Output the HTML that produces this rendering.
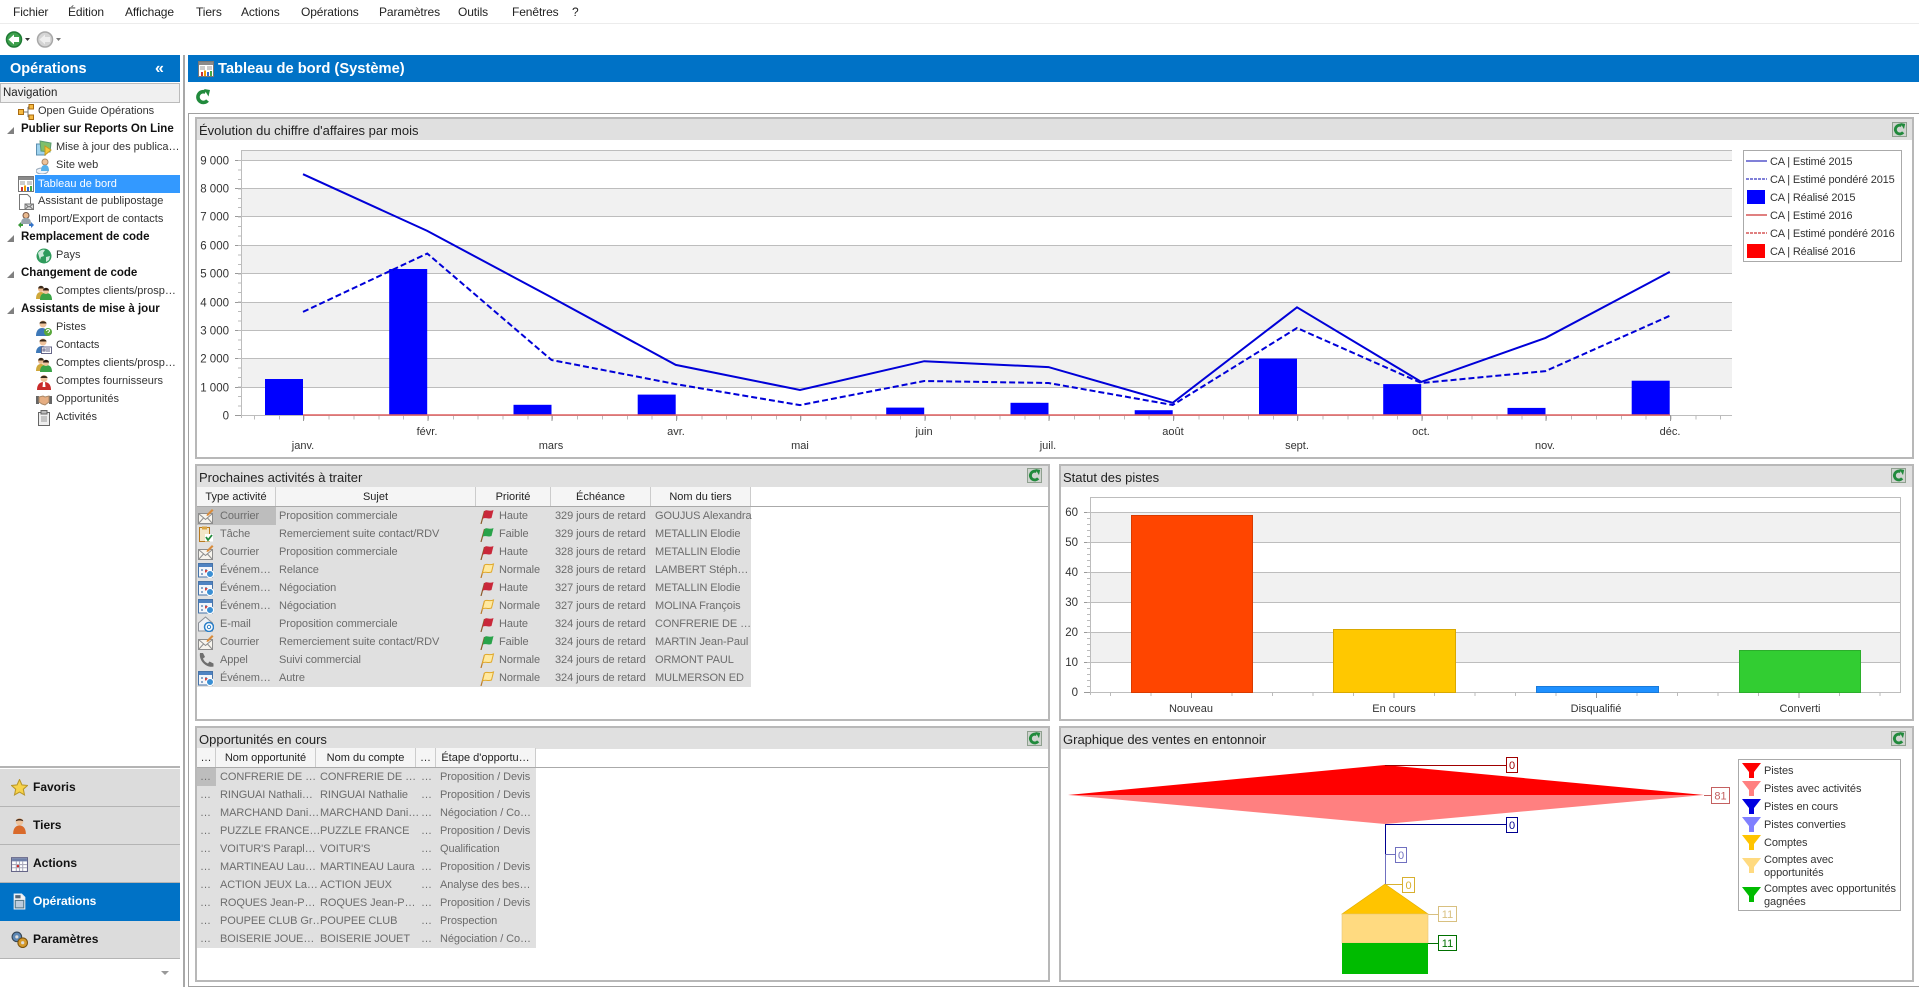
<!DOCTYPE html>
<html lang="fr"><head><meta charset="utf-8"><title>Tableau de bord</title>
<style>
html,body{margin:0;padding:0;background:#fff}
body{width:1919px;height:987px;overflow:hidden;position:relative;font:11px/18px "Liberation Sans",sans-serif;color:#222}
.a,.t,.p,.h,.r,.ic{position:absolute}
.t{white-space:nowrap}
.ic{width:16px;height:16px}
.m{top:3px;color:#222;font-size:12px;letter-spacing:-.1px}
.tree{font-size:11px;color:#333;line-height:19px}
.b{font-weight:bold;color:#111;font-size:11.500px;line-height:19px}
.p{border:2px solid #b8b8b8;background:#fff;box-sizing:border-box}
.h{left:0;right:0;top:0;height:21px;background:#e0e0e0;font-size:13px;line-height:24px;padding-left:2px;color:#222;white-space:nowrap}
.rb{position:absolute;width:15px;height:15px;background:#cfd4cf;border:1px solid #8fa08f;box-sizing:border-box}
.rb svg{display:block;width:13px;height:13px}
.gh{position:absolute;height:19px;background:#f5f5f5;border-right:1px solid #ccc;box-sizing:border-box;text-align:center;line-height:21px;color:#222;font-size:11px;white-space:nowrap;overflow:hidden}
.ln{position:absolute;height:1px;background:#aaa}
.g{position:absolute;background:#e0e0e0}
.r{height:18px;left:0;right:0;color:#6c6c6c;font-size:11px;letter-spacing:-.08px;line-height:19px;white-space:nowrap}
.r span{position:absolute;top:0}
.r svg{position:absolute;top:1px;width:16px;height:16px}
.n{position:absolute;left:0;width:180px;height:37px;background:#dcdcdc;font-weight:bold;font-size:12px;line-height:37px;color:#111;text-indent:33px;border-bottom:1px solid #b4b4b4;box-sizing:content-box}
.n svg{position:absolute;left:11px;top:10px;width:17px;height:17px}
svg text{font-family:"Liberation Sans",sans-serif}
</style></head><body>
<svg width="0" height="0" style="position:absolute"><defs>
<symbol id="ref" viewBox="0 0 16 16"><path d="M12.500 11.500a5.400 5.400 0 1 1-2-8.400" fill="none" stroke="#218a3c" stroke-width="3.600"/><path d="M9 0l6 1-1.500 6.500z" fill="#218a3c"/></symbol>
<symbol id="dash" viewBox="0 0 16 16"><rect x=".5" y=".5" width="15" height="15" fill="#fff" stroke="#777"/><rect x="1" y="1" width="14" height="3" fill="#8a8a8a"/><path d="M2 6h5M9 6h5M2 8h5M9 8h5" stroke="#999"/><rect x="3" y="11" width="2" height="4" fill="#c33"/><rect x="6" y="9.500" width="2" height="5.500" fill="#e90"/><rect x="9" y="11" width="2" height="4" fill="#36c"/><rect x="12" y="10" width="2" height="5" fill="#4a4"/></symbol>
<symbol id="guide" viewBox="0 0 16 16"><path d="M6 8h4M10 3v10M10 3h2M10 13h2" stroke="#777" fill="none"/><rect x=".5" y="5.500" width="5" height="5" fill="#f5b942" stroke="#a86a10"/><rect x="11" y=".5" width="4.500" height="4.500" fill="#f5b942" stroke="#a86a10"/><rect x="11" y="11" width="4.500" height="4.500" fill="#f5b942" stroke="#a86a10"/></symbol>
<symbol id="pub" viewBox="0 0 16 16"><rect x="0.500" y="4" width="9" height="11" fill="#9fd3ee" stroke="#5b8fb0"/><path d="M4 1l11 2-1 9-9-1z" fill="#7fbf6a" stroke="#5a9a70"/><path d="M9 6l6 4-6 5z" fill="#f7c83a" stroke="#c79a20"/></symbol>
<symbol id="web" viewBox="0 0 16 16"><ellipse cx="6" cy="13" rx="6" ry="3" fill="#eef4fa" stroke="#9ab"/><circle cx="9" cy="4" r="3" fill="#eec39a" stroke="#a86"/><path d="M5 13c0-5 2-6 4-6s4 1 4 6z" fill="#58b0e8"/></symbol>
<symbol id="mail" viewBox="0 0 16 16"><path d="M1.500 .5h8l3 3v12h-11z" fill="#fff" stroke="#777"/><rect x="7" y="10" width="8.500" height="5.500" fill="#ddd" stroke="#777"/><path d="M7 10l4 3 4-3M7 15.500l3-3M15 15.500l-3-3" stroke="#777" fill="none"/></symbol>
<symbol id="imp" viewBox="0 0 16 16"><circle cx="8" cy="3.500" r="3" fill="#e9b98e" stroke="#754"/><path d="M3 12c0-5 2-6 5-6s5 1 5 6z" fill="#99a4ad"/><path d="M0 13l3-3v2h2v2H3v2z" fill="#3a9a3a"/><path d="M16 13l-3-3v2h-2v2h2v2z" fill="#3575c9"/></symbol>
<symbol id="globe" viewBox="0 0 16 16"><circle cx="8" cy="8" r="7.500" fill="#2f9b5c"/><path d="M2 5c2-3 5-4 7-3l-2 3 1 3-3 1-1 3zM10 9l4-1-1 4-3 2z" fill="#cfeadb"/></symbol>
<symbol id="pers" viewBox="0 0 16 16"><path d="M2 16c0-6 3-8 6-8s6 2 6 8z" fill="#d96a2b"/><circle cx="8" cy="4.500" r="3.500" fill="#efc39c"/><path d="M4.500 4c0-3 7-3 7 0-2-1-5-1-7 0z" fill="#4a2d1a"/></symbol>
<symbol id="pG" viewBox="0 0 16 16"><circle cx="5" cy="5" r="3" fill="#e9b98e"/><path d="M2.200 4.500c0-3.500 5.600-3.500 5.600 0z" fill="#3a2a1a"/><path d="M0 15c0-5 2-7 5-7s4 2 4 7z" fill="#cfa83a"/><path d="M4 16c0-6 3-7 6-7s6 1 6 7z" fill="#3aa346"/><circle cx="10" cy="7" r="3" fill="#efc39c"/><path d="M7 6.500c0-3.500 6-3.500 6 0z" fill="#2a1a10"/></symbol>
<symbol id="pB" viewBox="0 0 16 16"><path d="M0 16c0-6 3-8 6-8s6 2 6 8z" fill="#3d78b8"/><circle cx="7" cy="4" r="3.500" fill="#efc39c"/><path d="M3.500 3.500c0-3 7-3 7 0z" fill="#3a2a1a"/><circle cx="12" cy="12" r="4" fill="#5aa83c"/><path d="M10.500 11c0-2 3-2 3 0 0 1-1.500 1-1.500 2" stroke="#fff" fill="none"/></symbol>
<symbol id="pC" viewBox="0 0 16 16"><path d="M0 15c0-5 3-7 6-7s6 2 6 7z" fill="#3d78b8"/><circle cx="7" cy="4" r="3.500" fill="#efc39c"/><path d="M3.500 3.500c0-3 7-3 7 0z" fill="#3a2a1a"/><rect x="5.500" y="9" width="10" height="6.500" fill="#fff" stroke="#668"/><path d="M7 11h2v2H7zM10 11h4M10 13h4" stroke="#668" fill="none"/></symbol>
<symbol id="pR" viewBox="0 0 16 16"><path d="M1 16c0-6 3-8 7-8s7 2 7 8z" fill="#c92a2a"/><circle cx="8" cy="4.500" r="3.500" fill="#efc39c"/><path d="M4.500 4c0-3 7-3 7 0z" fill="#3a2a1a"/><path d="M7 8h2l.5 5h-3z" fill="#fff"/></symbol>
<symbol id="hands" viewBox="0 0 16 16"><path d="M0 4h3v8H0zM13 4h3v8h-3z" fill="#666"/><path d="M3 5l4-1 2 1 4-1v6l-4 3-3-1-3-2z" fill="#e6ae82" stroke="#a86"/></symbol>
<symbol id="clip" viewBox="0 0 16 16"><rect x="2.500" y="2.500" width="11" height="13" fill="#eee" stroke="#666"/><rect x="5" y="0.500" width="6" height="3.500" fill="#bbb" stroke="#666"/><path d="M5 7h6M5 9h6M5 11h6" stroke="#999"/></symbol>
<symbol id="env" viewBox="0 0 16 16"><rect x=".5" y="5.500" width="14" height="10" fill="#f6f4ee" stroke="#8d8d8d"/><path d="M.5 5.500l7 6 7-6M.5 15.500l5.500-6M14.500 15.500L9 9.500" fill="none" stroke="#8d8d8d"/><path d="M9 6l5-5 1.500 1.500-5 5-2 .5z" fill="#d98b3a"/></symbol>
<symbol id="task" viewBox="0 0 16 16"><rect x="1.500" y="1.500" width="10" height="14" fill="#f2e6c8" stroke="#b7791f"/><rect x="4" y=".5" width="5" height="3" fill="#d9a441"/><rect x="7" y="8" width="8" height="7.500" fill="#fff"/><path d="M8 11l2 3 4-5" fill="none" stroke="#1f8a3c" stroke-width="1.800"/></symbol>
<symbol id="evt" viewBox="0 0 16 16"><rect x=".5" y="1.500" width="14" height="13.500" fill="#f4f6fa" stroke="#4673a8"/><rect x="1" y="2" width="13" height="3" fill="#4f83c2"/><path d="M3 7h2v2H3zM7 7h2v2H7zM3 11h2v2H3z" fill="#8aa6c8"/><rect x="7" y="8" width="2.500" height="2.500" fill="#c44"/><circle cx="12" cy="12" r="3.500" fill="#3a8fd4" stroke="#fff"/></symbol>
<symbol id="em" viewBox="0 0 16 16"><path d="M.5 7l7-6 7 6v8H.5z" fill="#eef1f5" stroke="#8a8f96"/><circle cx="11" cy="11" r="4.500" fill="#fff" stroke="#2a7fc9" stroke-width="1.500"/><circle cx="11" cy="11" r="1.700" fill="none" stroke="#2a7fc9"/></symbol>
<symbol id="tel" viewBox="0 0 16 16"><path d="M2 1l3 0 2 4-2 1.500c1 2.500 2.500 4 5 5l1.500-2 4 2v3c-7 2-15-6-13.500-13.500z" fill="#6f6f6f"/></symbol>
<symbol id="fR" viewBox="0 0 16 16"><path d="M2 16L5.500 3" stroke="#8a5a2a" stroke-width="1.200"/><path d="M5.500 3c3-2 4 1 9-1l-2 8c-4 1.500-6-1-9 1z" fill="#c9283a"/></symbol>
<symbol id="fG" viewBox="0 0 16 16"><path d="M2 16L5.500 3" stroke="#8a5a2a" stroke-width="1.200"/><path d="M5.500 3c3-2 4 1 9-1l-2 8c-4 1.500-6-1-9 1z" fill="#2aa34a"/></symbol>
<symbol id="fY" viewBox="0 0 16 16"><path d="M2 16L5.500 3" stroke="#b87a2a" stroke-width="1.200"/><path d="M5.500 3c3-2 4 1 9-1l-2 8c-4 1.500-6-1-9 1z" fill="#ffe9a0" stroke="#e0a82a"/></symbol>
<symbol id="star" viewBox="0 0 16 16"><path d="M8 .5l2.300 5 5.200.6-3.900 3.500 1.100 5.400L8 12.300l-4.700 2.700 1.100-5.400L.5 6.100l5.200-.6z" fill="#f7d34a" stroke="#b8962a"/></symbol>
<symbol id="cal" viewBox="0 0 16 16"><rect x=".5" y="2.500" width="15" height="13" fill="#fff" stroke="#668"/><rect x="1" y="3" width="14" height="3" fill="#6f7fa8"/><path d="M1 9h14M1 12h14M5 6v9M8 6v9M11 6v9" stroke="#aab"/><rect x="5.500" y="9.500" width="2" height="2" fill="#c22"/></symbol>
<symbol id="opw" viewBox="0 0 16 16"><path d="M3 1h7l3 3v11H3z" fill="#f2f2f2" stroke="#e8eef5"/><rect x="4" y="7" width="8" height="7" fill="#bcd" stroke="#578"/><rect x="4" y="2" width="5" height="3" fill="#567"/></symbol>
<symbol id="gear" viewBox="0 0 16 16"><circle cx="5.500" cy="5.500" r="4.500" fill="#5d87b4" stroke="#345"/><circle cx="5.500" cy="5.500" r="1.500" fill="#dcdcdc"/><circle cx="11" cy="11" r="4.500" fill="#d59a2b" stroke="#7a5310"/><circle cx="11" cy="11" r="1.500" fill="#dcdcdc"/></symbol>
</defs></svg>

<!-- menu -->
<div class="a" style="left:0;top:23px;width:1919px;height:1px;background:#ececec"></div>
<span class="t m" style="left:13px">Fichier</span>
<span class="t m" style="left:68px">Édition</span>
<span class="t m" style="left:125px">Affichage</span>
<span class="t m" style="left:196px">Tiers</span>
<span class="t m" style="left:241px">Actions</span>
<span class="t m" style="left:301px">Opérations</span>
<span class="t m" style="left:379px">Paramètres</span>
<span class="t m" style="left:458px">Outils</span>
<span class="t m" style="left:512px">Fenêtres</span>
<span class="t m" style="left:572px">?</span>
<!-- nav buttons -->
<svg class="a" style="left:5px;top:30px" width="58" height="19" viewBox="0 0 58 19"><circle cx="9" cy="9.500" r="7.500" fill="#3da04c" stroke="#1f7a34" stroke-width="1.500"/><path d="M3.500 9.500l5.500-5V7h5v5H9v2.500z" fill="#fff"/><path d="M20 8h5l-2.500 3z" fill="#333"/><circle cx="40" cy="9.500" r="7.500" fill="#d4d4d4" stroke="#a8a8a8" stroke-width="1.500"/><path d="M34.500 9.500l5.500-5V7h5v5h-5v2.500z" fill="#eee"/><path d="M51 8h5l-2.500 3z" fill="#777"/></svg>

<!-- sidebar -->
<div class="a" style="left:0;top:55px;width:180px;height:27px;background:#0072c6;color:#fff;font:bold 14.500px/28px 'Liberation Sans',sans-serif;text-indent:10px">Opérations<span class="t" style="left:155px;top:0;font-size:16px;text-indent:0">«</span></div>
<div class="a" style="left:0;top:83px;width:180px;height:20px;background:#f0f0f0;border:1px solid #bbb;box-sizing:border-box;line-height:19px;font-size:11.500px;padding-left:2px">Navigation</div>
<svg class="a" style="left:0;top:100px" width="20" height="230" viewBox="0 0 20 230"><g fill="#808080"><path d="M7 34l7-7v7zM7 142l7-7v7zM7 178l7-7v7zM7 214l7-7v7z"/></g></svg>

<svg class="ic" style="left:18px;top:104px"><use href="#guide"/></svg><span class="t tree" style="left:38px;top:102px">Open Guide Opérations</span>
<span class="t b" style="left:21px;top:120px">Publier sur Reports On Line</span>
<svg class="ic" style="left:36px;top:140px"><use href="#pub"/></svg><span class="t tree" style="left:56px;top:138px">Mise à jour des publica…</span>
<svg class="ic" style="left:36px;top:158px"><use href="#web"/></svg><span class="t tree" style="left:56px;top:156px">Site web</span>
<svg class="ic" style="left:18px;top:176px"><use href="#dash"/></svg><div class="a" style="left:35px;top:175px;width:145px;height:18px;background:#3399ff;color:#fff;line-height:19px;text-indent:3px">Tableau de bord</div>
<svg class="ic" style="left:18px;top:194px"><use href="#mail"/></svg><span class="t tree" style="left:38px;top:192px">Assistant de publipostage</span>
<svg class="ic" style="left:18px;top:212px"><use href="#imp"/></svg><span class="t tree" style="left:38px;top:210px">Import/Export de contacts</span>
<span class="t b" style="left:21px;top:228px">Remplacement de code</span>
<svg class="ic" style="left:36px;top:248px"><use href="#globe"/></svg><span class="t tree" style="left:56px;top:246px">Pays</span>
<span class="t b" style="left:21px;top:264px">Changement de code</span>
<svg class="ic" style="left:36px;top:284px"><use href="#pG"/></svg><span class="t tree" style="left:56px;top:282px">Comptes clients/prosp…</span>
<span class="t b" style="left:21px;top:300px">Assistants de mise à jour</span>
<svg class="ic" style="left:36px;top:320px"><use href="#pB"/></svg><span class="t tree" style="left:56px;top:318px">Pistes</span>
<svg class="ic" style="left:36px;top:338px"><use href="#pC"/></svg><span class="t tree" style="left:56px;top:336px">Contacts</span>
<svg class="ic" style="left:36px;top:356px"><use href="#pG"/></svg><span class="t tree" style="left:56px;top:354px">Comptes clients/prosp…</span>
<svg class="ic" style="left:36px;top:374px"><use href="#pR"/></svg><span class="t tree" style="left:56px;top:372px">Comptes fournisseurs</span>
<svg class="ic" style="left:36px;top:392px"><use href="#hands"/></svg><span class="t tree" style="left:56px;top:390px">Opportunités</span>
<svg class="ic" style="left:36px;top:410px"><use href="#clip"/></svg><span class="t tree" style="left:56px;top:408px">Activités</span>

<!-- bottom nav -->
<div class="a" style="left:0;top:766px;width:180px;height:2px;background:#b4b4b4"></div>
<div class="n" style="top:769px"><svg><use href="#star"/></svg>Favoris</div>
<div class="n" style="top:807px"><svg><use href="#pers"/></svg>Tiers</div>
<div class="n" style="top:845px"><svg><use href="#cal"/></svg>Actions</div>
<div class="n" style="top:883px;background:#0072c6;color:#fff;height:38px;border:0"><svg><use href="#opw"/></svg>Opérations</div>
<div class="n" style="top:921px"><svg><use href="#gear"/></svg>Paramètres</div>
<svg class="a" style="left:161px;top:971px" width="8" height="5"><path d="M0 0h8l-4 4z" fill="#999"/></svg>
<div class="a" style="left:183px;top:55px;width:2px;height:932px;background:#a8a8a8"></div>

<!-- main header -->
<div class="a" style="left:188px;top:55px;width:1731px;height:27px;background:#0072c6;color:#fff;font:bold 14.700px/28px 'Liberation Sans',sans-serif;text-indent:30px">Tableau de bord (Système)</div>
<svg class="ic" style="left:198px;top:61px"><use href="#dash"/></svg>
<svg class="ic" style="left:195px;top:89px"><use href="#ref"/></svg>
<div class="a" style="left:188px;top:113px;width:1731px;height:874px;border:1px solid #a0a0a0;box-sizing:border-box;border-right:0"></div>

<!-- panel 1 -->
<div class="p" style="left:195px;top:117px;width:1719px;height:342px"><div class="h">Évolution du chiffre d'affaires par mois</div></div>
<div class="rb" style="left:1892px;top:122px"><svg><use href="#ref"/></svg></div>
<svg class="a" style="left:197px;top:140px" width="1715" height="317" viewBox="197 140 1715 317">
<rect x="241" y="150" width="1491" height="10.500" fill="#f1f1f1"/>
<g fill="#f1f1f1"><rect x="241" y="188.500" width="1491" height="28"/><rect x="241" y="245" width="1491" height="28.500"/><rect x="241" y="302" width="1491" height="28.500"/><rect x="241" y="358.500" width="1491" height="28.500"/></g>
<g stroke="#bdbdbd" shape-rendering="crispEdges"><path d="M241 150.500H1732M241 160.500H1732M241 188.500H1732M241 216.500H1732M241 245.500H1732M241 273.500H1732M241 302.500H1732M241 330.500H1732M241 358.500H1732M241 387.500H1732M241 415.500H1732M241.500 150V418"/></g>
<g stroke="#999" fill="none" shape-rendering="crispEdges"><path d="M235 160.500h6M235 188.500h6M235 216.500h6M235 245.500h6M235 273.500h6M235 302.500h6M235 330.500h6M235 358.500h6M235 387.500h6M235 415.500h6"/>
<line x1="239.500" x2="239.500" y1="160" y2="415" stroke-width="3" stroke-dasharray="1 8.440" stroke="#bbb"/>
<line x1="241" x2="1732" y1="417.500" y2="417.500" stroke-width="4" stroke-dasharray="1 23.850" stroke="#bbb" stroke-dashoffset="-13"/>
<line x1="303" x2="1732" y1="418" y2="418" stroke-width="6" stroke-dasharray="1 123.250" stroke="#999"/></g>
<g fill="#0000ff"><rect x="265" y="379" width="38" height="36"/><rect x="389.200" y="269" width="38" height="146"/><rect x="513.500" y="404.800" width="38" height="10.200"/><rect x="637.700" y="394.600" width="38" height="20.400"/><rect x="762" y="414.500" width="38" height="1"/><rect x="886.200" y="407.600" width="38" height="7.400"/><rect x="1010.500" y="402.800" width="38" height="12.200"/><rect x="1134.700" y="410.200" width="38" height="4.800"/><rect x="1259" y="358.600" width="38" height="56.400"/><rect x="1383.200" y="384.100" width="38" height="30.900"/><rect x="1507.500" y="407.900" width="38" height="7.100"/><rect x="1631.700" y="380.700" width="38" height="34.300"/></g>
<path d="M303 415H1670" stroke="#e06060" stroke-width="1.500"/>
<polyline fill="none" stroke="#0000d8" stroke-width="2" points="303,174.200 427.250,230.900 551.500,297.400 675.750,364.900 800,390 924.250,361.200 1048.500,367.100 1172.750,402.800 1297,307.300 1421.250,381.900 1545.500,337.900 1669.750,271.900"/>
<polyline fill="none" stroke="#0000d8" stroke-width="2" stroke-dasharray="6 3" points="303,311.900 427.250,253.500 551.500,360 675.750,384.100 800,405.100 924.250,381 1048.500,383 1172.750,405 1297,328 1421.250,383 1545.500,371.100 1669.750,315.800"/>
<g font-size="11.500" fill="#333" text-anchor="end"><text x="229" y="164.500">9 000</text><text x="229" y="192.500">8 000</text><text x="229" y="220.500">7 000</text><text x="229" y="249.500">6 000</text><text x="229" y="277.500">5 000</text><text x="229" y="306.500">4 000</text><text x="229" y="334.500">3 000</text><text x="229" y="362.500">2 000</text><text x="229" y="391.500">1 000</text><text x="229" y="419.500">0</text></g>
<g font-size="11" fill="#333" text-anchor="middle"><text x="303" y="449">janv.</text><text x="427" y="435">févr.</text><text x="551" y="449">mars</text><text x="676" y="435">avr.</text><text x="800" y="449">mai</text><text x="924" y="435">juin</text><text x="1048" y="449">juil.</text><text x="1173" y="435">août</text><text x="1297" y="449">sept.</text><text x="1421" y="435">oct.</text><text x="1545" y="449">nov.</text><text x="1670" y="435">déc.</text></g>
<rect x="1743.500" y="150.500" width="158" height="111" fill="#fff" stroke="#aaa"/>
<g font-size="11" fill="#333" letter-spacing="-.15"><text x="1770" y="165">CA | Estimé 2015</text><text x="1770" y="183">CA | Estimé pondéré 2015</text><text x="1770" y="201">CA | Réalisé 2015</text><text x="1770" y="219">CA | Estimé 2016</text><text x="1770" y="237">CA | Estimé pondéré 2016</text><text x="1770" y="255">CA | Réalisé 2016</text></g>
<path d="M1746 161h21" stroke="#0000b0"/><path d="M1746 179h21" stroke="#0000b0" stroke-dasharray="3 1"/><rect x="1747" y="190" width="18" height="14" fill="#0000ff"/>
<path d="M1746 215h21" stroke="#c00000"/><path d="M1746 233h21" stroke="#c00000" stroke-dasharray="3 1"/><rect x="1747" y="244" width="18" height="14" fill="#ff0000"/>
</svg>

<!-- panel 2 left: activities -->
<div class="p" style="left:195px;top:464px;width:855px;height:257px"><div class="h">Prochaines activités à traiter</div></div>
<div class="rb" style="left:1027px;top:468px"><svg><use href="#ref"/></svg></div>
<div class="ln" style="left:197px;top:506px;width:851px"></div>
<div class="gh" style="left:197px;top:487px;width:79px">Type activité</div>
<div class="gh" style="left:276px;top:487px;width:200px">Sujet</div>
<div class="gh" style="left:476px;top:487px;width:75px">Priorité</div>
<div class="gh" style="left:551px;top:487px;width:100px">Échéance</div>
<div class="gh" style="left:651px;top:487px;width:100px">Nom du tiers</div>
<div class="g" style="left:197px;top:507px;width:554px;height:180px">
<div class="a" style="left:0;top:0;width:79px;height:18px;background:#bdbdbd"></div>
<div class="r" style="top:0"><svg style="left:1px"><use href="#env"/></svg><span style="left:23px">Courrier</span><span style="left:82px">Proposition commerciale</span><svg style="left:282px"><use href="#fR"/></svg><span style="left:302px">Haute</span><span style="left:358px">329 jours de retard</span><span style="left:458px">GOUJUS Alexandra</span></div>
<div class="r" style="top:18px"><svg style="left:1px"><use href="#task"/></svg><span style="left:23px">Tâche</span><span style="left:82px">Remerciement suite contact/RDV</span><svg style="left:282px"><use href="#fG"/></svg><span style="left:302px">Faible</span><span style="left:358px">329 jours de retard</span><span style="left:458px">METALLIN Elodie</span></div>
<div class="r" style="top:36px"><svg style="left:1px"><use href="#env"/></svg><span style="left:23px">Courrier</span><span style="left:82px">Proposition commerciale</span><svg style="left:282px"><use href="#fR"/></svg><span style="left:302px">Haute</span><span style="left:358px">328 jours de retard</span><span style="left:458px">METALLIN Elodie</span></div>
<div class="r" style="top:54px"><svg style="left:1px"><use href="#evt"/></svg><span style="left:23px">Événem…</span><span style="left:82px">Relance</span><svg style="left:282px"><use href="#fY"/></svg><span style="left:302px">Normale</span><span style="left:358px">328 jours de retard</span><span style="left:458px">LAMBERT Stéph…</span></div>
<div class="r" style="top:72px"><svg style="left:1px"><use href="#evt"/></svg><span style="left:23px">Événem…</span><span style="left:82px">Négociation</span><svg style="left:282px"><use href="#fR"/></svg><span style="left:302px">Haute</span><span style="left:358px">327 jours de retard</span><span style="left:458px">METALLIN Elodie</span></div>
<div class="r" style="top:90px"><svg style="left:1px"><use href="#evt"/></svg><span style="left:23px">Événem…</span><span style="left:82px">Négociation</span><svg style="left:282px"><use href="#fY"/></svg><span style="left:302px">Normale</span><span style="left:358px">327 jours de retard</span><span style="left:458px">MOLINA François</span></div>
<div class="r" style="top:108px"><svg style="left:1px"><use href="#em"/></svg><span style="left:23px">E-mail</span><span style="left:82px">Proposition commerciale</span><svg style="left:282px"><use href="#fR"/></svg><span style="left:302px">Haute</span><span style="left:358px">324 jours de retard</span><span style="left:458px">CONFRERIE DE …</span></div>
<div class="r" style="top:126px"><svg style="left:1px"><use href="#env"/></svg><span style="left:23px">Courrier</span><span style="left:82px">Remerciement suite contact/RDV</span><svg style="left:282px"><use href="#fG"/></svg><span style="left:302px">Faible</span><span style="left:358px">324 jours de retard</span><span style="left:458px">MARTIN Jean-Paul</span></div>
<div class="r" style="top:144px"><svg style="left:1px"><use href="#tel"/></svg><span style="left:23px">Appel</span><span style="left:82px">Suivi commercial</span><svg style="left:282px"><use href="#fY"/></svg><span style="left:302px">Normale</span><span style="left:358px">324 jours de retard</span><span style="left:458px">ORMONT PAUL</span></div>
<div class="r" style="top:162px"><svg style="left:1px"><use href="#evt"/></svg><span style="left:23px">Événem…</span><span style="left:82px">Autre</span><svg style="left:282px"><use href="#fY"/></svg><span style="left:302px">Normale</span><span style="left:358px">324 jours de retard</span><span style="left:458px">MULMERSON ED</span></div>
</div>

<!-- panel 3 left: opportunities -->
<div class="p" style="left:195px;top:726px;width:855px;height:256px"><div class="h">Opportunités en cours</div></div>
<div class="rb" style="left:1027px;top:731px"><svg><use href="#ref"/></svg></div>
<div class="ln" style="left:197px;top:767px;width:851px"></div>
<div class="gh" style="left:197px;top:748px;width:19px">…</div>
<div class="gh" style="left:216px;top:748px;width:100px">Nom opportunité</div>
<div class="gh" style="left:316px;top:748px;width:100px">Nom du compte</div>
<div class="gh" style="left:416px;top:748px;width:20px">…</div>
<div class="gh" style="left:436px;top:748px;width:100px">Étape d'opportu…</div>
<div class="g" style="left:197px;top:768px;width:339px;height:180px">
<div class="a" style="left:0;top:0;width:19px;height:18px;background:#bdbdbd"></div>
<div class="r" style="top:0"><span style="left:3px">…</span><span style="left:23px">CONFRERIE DE …</span><span style="left:123px">CONFRERIE DE …</span><span style="left:224px">…</span><span style="left:243px">Proposition / Devis</span></div>
<div class="r" style="top:18px"><span style="left:3px">…</span><span style="left:23px">RINGUAI Nathali…</span><span style="left:123px">RINGUAI Nathalie</span><span style="left:224px">…</span><span style="left:243px">Proposition / Devis</span></div>
<div class="r" style="top:36px"><span style="left:3px">…</span><span style="left:23px">MARCHAND Dani…</span><span style="left:123px">MARCHAND Dani…</span><span style="left:224px">…</span><span style="left:243px">Négociation / Co…</span></div>
<div class="r" style="top:54px"><span style="left:3px">…</span><span style="left:23px">PUZZLE FRANCE…</span><span style="left:123px">PUZZLE FRANCE</span><span style="left:224px">…</span><span style="left:243px">Proposition / Devis</span></div>
<div class="r" style="top:72px"><span style="left:3px">…</span><span style="left:23px">VOITUR'S Parapl…</span><span style="left:123px">VOITUR'S</span><span style="left:224px">…</span><span style="left:243px">Qualification</span></div>
<div class="r" style="top:90px"><span style="left:3px">…</span><span style="left:23px">MARTINEAU Lau…</span><span style="left:123px">MARTINEAU Laura</span><span style="left:224px">…</span><span style="left:243px">Proposition / Devis</span></div>
<div class="r" style="top:108px"><span style="left:3px">…</span><span style="left:23px">ACTION JEUX La…</span><span style="left:123px">ACTION JEUX</span><span style="left:224px">…</span><span style="left:243px">Analyse des bes…</span></div>
<div class="r" style="top:126px"><span style="left:3px">…</span><span style="left:23px">ROQUES Jean-P…</span><span style="left:123px">ROQUES Jean-P…</span><span style="left:224px">…</span><span style="left:243px">Proposition / Devis</span></div>
<div class="r" style="top:144px"><span style="left:3px">…</span><span style="left:23px">POUPEE CLUB Gr…</span><span style="left:123px">POUPEE CLUB</span><span style="left:224px">…</span><span style="left:243px">Prospection</span></div>
<div class="r" style="top:162px"><span style="left:3px">…</span><span style="left:23px">BOISERIE JOUE…</span><span style="left:123px">BOISERIE JOUET</span><span style="left:224px">…</span><span style="left:243px">Négociation / Co…</span></div>
</div>

<!-- panel right top -->
<div class="p" style="left:1059px;top:464px;width:855px;height:257px"><div class="h">Statut des pistes</div></div>
<div class="rb" style="left:1891px;top:468px"><svg><use href="#ref"/></svg></div>
<svg class="a" style="left:1061px;top:487px" width="851" height="232" viewBox="1061 487 851 232">
<g fill="#f1f1f1"><rect x="1090" y="512" width="811" height="30"/><rect x="1090" y="572" width="811" height="30"/><rect x="1090" y="632" width="811" height="30"/></g>
<g stroke="#bdbdbd" shape-rendering="crispEdges"><path d="M1090 497.500H1901M1090 512.500H1901M1090 542.500H1901M1090 572.500H1901M1090 602.500H1901M1090 632.500H1901M1090 662.500H1901M1090 692.500H1901M1090.500 497V695M1900.500 497V692"/></g>
<g stroke="#999" fill="none" shape-rendering="crispEdges"><path d="M1084 512.500h6M1084 542.500h6M1084 572.500h6M1084 602.500h6M1084 632.500h6M1084 662.500h6M1084 692.500h6"/>
<line x1="1088.500" x2="1088.500" y1="512" y2="692" stroke-width="3" stroke-dasharray="1 5" stroke="#bbb"/>
<line x1="1110" x2="1901" y1="694" y2="694" stroke-width="4" stroke-dasharray="1 39.500" stroke="#bbb"/>
<line x1="1191" x2="1901" y1="695" y2="695" stroke-width="6" stroke-dasharray="1 201.500" stroke="#999"/></g>
<rect x="1131.500" y="515.500" width="121" height="177" fill="#ff4500" stroke="#d93b00"/>
<rect x="1333.500" y="629.500" width="122" height="63" fill="#ffc800" stroke="#d9a800"/>
<rect x="1536.500" y="686.500" width="122" height="6" fill="#1e90ff" stroke="#1a7ad9"/>
<rect x="1739.500" y="650.500" width="121" height="42" fill="#32cd32" stroke="#2bae2b"/>
<g font-size="11.500" fill="#333" text-anchor="end"><text x="1078" y="516">60</text><text x="1078" y="546">50</text><text x="1078" y="576">40</text><text x="1078" y="606">30</text><text x="1078" y="636">20</text><text x="1078" y="666">10</text><text x="1078" y="696">0</text></g>
<g font-size="11" fill="#333" text-anchor="middle"><text x="1191" y="712">Nouveau</text><text x="1394" y="712">En cours</text><text x="1596" y="712">Disqualifié</text><text x="1800" y="712">Converti</text></g>
</svg>

<!-- panel right bottom: funnel -->
<div class="p" style="left:1059px;top:726px;width:855px;height:256px"><div class="h">Graphique des ventes en entonnoir</div></div>
<div class="rb" style="left:1891px;top:731px"><svg><use href="#ref"/></svg></div>
<svg class="a" style="left:1061px;top:748px" width="851" height="232" viewBox="1061 748 851 232">
<polygon points="1068,795 1385,765 1704,795" fill="#ff0000"/>
<polygon points="1068,795 1704,795 1385,824" fill="#ff8080"/>
<polygon points="1385,884 1428,914 1342,914" fill="#ffc400" stroke="#e0ae00" stroke-width=".6"/>
<rect x="1342" y="914" width="86" height="29" fill="#ffda80" stroke="#e8c878" stroke-width=".6"/>
<rect x="1342" y="943" width="86" height="31" fill="#00bb00"/>
<g fill="none" shape-rendering="crispEdges">
<path d="M1385 765.500H1506" stroke="#a00000"/>
<path d="M1704 795.500h7" stroke="#c46060"/>
<path d="M1385.500 824.500H1506M1385.500 824V854" stroke="#000090"/>
<path d="M1385.500 854V884M1385.500 854.500H1395" stroke="#7070c0"/>
<path d="M1385 884.500h17" stroke="#d8b030"/>
<path d="M1428 914.500h10" stroke="#d8c080"/>
<path d="M1428 943.500h10" stroke="#007000"/>
<g fill="#fff"><rect x="1506.500" y="757.500" width="11" height="15" stroke="#a00000"/><rect x="1711.500" y="787.500" width="18" height="16" stroke="#c46060"/><rect x="1506.500" y="817.500" width="11" height="15" stroke="#000090"/><rect x="1395.500" y="847.500" width="11" height="15" stroke="#7070c0"/><rect x="1402.500" y="877.500" width="12" height="15" stroke="#d8b030"/><rect x="1438.500" y="906.500" width="18" height="15" stroke="#d8c080"/><rect x="1438.500" y="935.500" width="18" height="15" stroke="#007000"/></g></g>
<g font-size="11" text-anchor="middle"><text x="1512" y="769" fill="#a00000">0</text><text x="1720.500" y="799.500" fill="#c46060">81</text><text x="1512" y="829" fill="#000090">0</text><text x="1401" y="859" fill="#7070c0">0</text><text x="1408.500" y="889" fill="#d8b030">0</text><text x="1447.500" y="918" fill="#d8c080">11</text><text x="1447.500" y="947" fill="#007000">11</text></g>
<rect x="1738.500" y="759.500" width="162" height="151" fill="#fff" stroke="#aaa"/>
<polygon points="1742,763 1761,763 1754,772 1754,778 1749,778 1749,772" fill="#ff0000"/>
<polygon points="1742,781 1761,781 1754,790 1754,796 1749,796 1749,790" fill="#ff8080"/>
<polygon points="1742,799 1761,799 1754,808 1754,814 1749,814 1749,808" fill="#0000e0"/>
<polygon points="1742,817 1761,817 1754,826 1754,832 1749,832 1749,826" fill="#8080ff"/>
<polygon points="1742,835 1761,835 1754,844 1754,850 1749,850 1749,844" fill="#ffc400"/>
<polygon points="1742,858 1761,858 1754,867 1754,873 1749,873 1749,867" fill="#ffda80"/>
<polygon points="1742,887 1761,887 1754,896 1754,902 1749,902 1749,896" fill="#00bb00"/>
<g font-size="11" fill="#333" letter-spacing="-.08"><text x="1764" y="774">Pistes</text><text x="1764" y="792">Pistes avec activités</text><text x="1764" y="810">Pistes en cours</text><text x="1764" y="828">Pistes converties</text><text x="1764" y="846">Comptes</text><text x="1764" y="863">Comptes avec</text><text x="1764" y="876">opportunités</text><text x="1764" y="892">Comptes avec opportunités</text><text x="1764" y="905">gagnées</text></g>
</svg>
</body></html>
